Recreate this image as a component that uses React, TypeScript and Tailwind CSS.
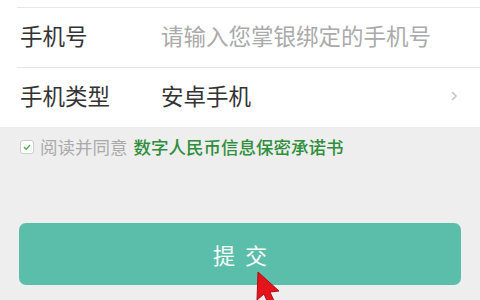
const font = "font-['Noto_Sans_CJK_SC','Noto_Sans',sans-serif]";

function Row({ label, children }: { label: string; children: React.ReactNode }) {
  return (
    <div className="ml-[17px] flex h-[60px] items-center border-t border-[#e6e6e6] pb-[4px] pl-[3px] pr-[18px] leading-none">
      <div className="w-[141px] text-[22.5px] text-[#333333]">{label}</div>
      <div className="flex flex-1 items-center justify-between text-[22.5px]">{children}</div>
    </div>
  );
}

export default function App() {
  return (
    <div className={`relative h-[300px] w-[480px] overflow-hidden bg-[#eeeeee] ${font}`}>
      <div className="bg-white pt-[7px]">
        <Row label="手机号">
          <span className="text-[#aaaaaa]">请输入您掌银绑定的手机号</span>
        </Row>
        <Row label="手机类型">
          <span className="text-[#333333]">安卓手机</span>
          <svg width="8" height="12" viewBox="0 0 8 12" className="mr-[4px]">
            <path d="M2 2 L6 6 L2 10" fill="none" stroke="#c4c4c4" strokeWidth="1.6" />
          </svg>
        </Row>
      </div>
      <div className="flex items-center gap-[6px] pl-[20px] pt-[11px] leading-none">
        <span className="flex h-[14px] w-[14px] items-center justify-center rounded-[3px] border border-[#cccccc] bg-white">
          <svg width="10" height="10" viewBox="0 0 10 10">
            <path d="M2 5 L4.2 7.2 L8 3" fill="none" stroke="#4caf50" strokeWidth="1.4" />
          </svg>
        </span>
        <span className="text-[17.5px] text-[#aaaaaa]">阅读并同意</span>
        <span className="text-[17.5px] font-medium text-[#2f8f3c]">数字人民币信息保密承诺书</span>
      </div>
      <div className="px-[19px] pt-[67px]">
        <button className="flex h-[62px] w-full items-center justify-center rounded-[7px] bg-[#5bbeaa] pl-[10px] text-[22px] leading-none tracking-[10px] text-white">
          提交
        </button>
      </div>
      <svg className="absolute left-[255px] top-[270px]" width="30" height="32" viewBox="0 0 30 32">
        <path d="M3 2 L2 30 L9 24 L13 33 L19 31 L15 22 L24 21 Z" fill="#e3141b" stroke="#b00d12" strokeWidth="1" />
      </svg>
    </div>
  );
}
